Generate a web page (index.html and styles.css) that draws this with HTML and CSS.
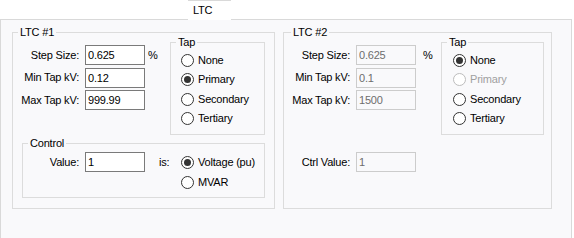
FILE: index.html
```html
<!DOCTYPE html>
<html>
<head>
<meta charset="utf-8">
<link rel="stylesheet" href="styles.css">
</head>
<body>
<div class="tabstrip"><div class="tab">LTC</div></div>
<div class="page">
  <div class="group ltc1">
    <span class="legend">LTC #1</span>
    <div class="top">
      <div class="fields">
        <span class="lbl">Step Size:</span><input class="tb" value="0.625"><span class="unit">%</span>
        <span class="lbl">Min Tap kV:</span><input class="tb" value="0.12"><span></span>
        <span class="lbl">Max Tap kV:</span><input class="tb" value="999.99"><span></span>
      </div>
      <div class="group tap">
        <span class="legend">Tap</span>
        <div class="opt"><span class="radio"></span>None</div>
        <div class="opt"><span class="radio on"></span>Primary</div>
        <div class="opt"><span class="radio"></span>Secondary</div>
        <div class="opt"><span class="radio"></span>Tertiary</div>
      </div>
    </div>
    <div class="group control">
      <span class="legend">Control</span>
      <div class="ctrl-row">
        <span class="lbl">Value:</span>
        <input class="tb" value="1">
        <span class="is">is:</span>
        <div class="ctrl-radios">
          <div class="opt"><span class="radio on"></span>Voltage (pu)</div>
          <div class="opt"><span class="radio"></span>MVAR</div>
        </div>
      </div>
    </div>
  </div>
  <div class="group ltc2">
    <span class="legend">LTC #2</span>
    <div class="top">
      <div class="fields">
        <span class="lbl">Step Size:</span><input class="tb" value="0.625" disabled><span class="unit">%</span>
        <span class="lbl">Min Tap kV:</span><input class="tb" value="0.1" disabled><span></span>
        <span class="lbl">Max Tap kV:</span><input class="tb" value="1500" disabled><span></span>
      </div>
      <div class="group tap">
        <span class="legend">Tap</span>
        <div class="opt"><span class="radio on"></span>None</div>
        <div class="opt off"><span class="radio"></span>Primary</div>
        <div class="opt"><span class="radio"></span>Secondary</div>
        <div class="opt"><span class="radio"></span>Tertiary</div>
      </div>
    </div>
    <div class="fields ctrl2">
      <span class="lbl">Ctrl Value:</span><input class="tb" value="1" disabled><span></span>
    </div>
  </div>
</div>
</body>
</html>
```
FILE: styles.css
```css
body {
  margin: 0;
  background: #ffffff;
  font-family: "Liberation Sans", Arial, sans-serif;
  font-size: 11px;
  line-height: 13px;
  letter-spacing: -0.2px;
  color: #000;
  width: 574px;
  height: 238px;
  overflow: hidden;
}

.tabstrip {
  height: 20px;
  display: flex;
}

.tab {
  margin-left: 188px;
  width: 43px;
  height: 20px;
  box-sizing: border-box;
  padding: 3px 0 0 5px;
  background: #ffffff;
  border-top: 1px solid #d9d9d9;
  position: relative;
  z-index: 1;
}

.page {
  margin-top: -1px;
  width: 572px;
  height: 230px;
  box-sizing: border-box;
  border: 1px solid #d9d9d9;
  border-bottom: none;
  background: #f9f9fb;
  display: flex;
  align-items: flex-start;
  gap: 8px;
  padding: 12px 0 0 11px;
}

.group {
  position: relative;
  border: 1px solid #dcdcdc;
  box-sizing: border-box;
}

.legend {
  position: absolute;
  top: -7px;
  left: 5px;
  padding: 0 2px;
  background: #f9f9fb;
  line-height: 13px;
  white-space: nowrap;
}

.ltc2 > .legend {
  left: 7px;
}

.ltc1 {
  width: 263px;
  height: 177px;
}

.ltc2 {
  width: 269px;
  height: 177px;
}

.top {
  display: flex;
  align-items: flex-start;
}

.fields {
  width: 157px;
  flex: none;
  margin-top: 12px;
  display: grid;
  grid-template-columns: 72px 60px auto;
  grid-auto-rows: 20px;
  row-gap: 2.5px;
  align-items: center;
}

.lbl {
  text-align: right;
  padding-right: 6px;
  white-space: nowrap;
}

.tb {
  box-sizing: border-box;
  width: 60px;
  height: 20px;
  border: 1px solid #7a7a7a;
  background: #ffffff;
  font: inherit;
  letter-spacing: inherit;
  padding: 0 2px;
  margin: 0;
  color: #000;
  outline: none;
}

.tb:disabled {
  border-color: #cccccc;
  background: #f9f9fb;
  color: #6d6d6d;
}

.unit {
  margin-left: 3px;
}

.ltc2 .unit {
  margin-left: 7px;
}

.tap {
  margin-top: 9px;
  width: 95px;
  height: 93px;
  padding: 8px 0 0 10px;
  flex: none;
}

.ltc2 .tap {
  width: 103px;
  padding-left: 11px;
}

.opt {
  display: flex;
  align-items: center;
  gap: 4px;
  height: 19.33px;
  white-space: nowrap;
}

.radio {
  width: 13px;
  height: 13px;
  box-sizing: border-box;
  border: 1px solid #333333;
  border-radius: 50%;
  background: #ffffff;
  display: flex;
  align-items: center;
  justify-content: center;
  flex: none;
}

.radio.on::after {
  content: "";
  width: 7px;
  height: 7px;
  border-radius: 50%;
  background: #333333;
}

.opt.off {
  color: #a0a0a0;
}

.opt.off .radio {
  border-color: #bcbcbc;
}

.control {
  width: 243px;
  height: 55px;
  margin: 8px 0 0 9px;
}

.ctrl-row {
  display: flex;
  align-items: flex-start;
  margin-top: 8px;
}

.ctrl-row .lbl {
  width: 62px;
  box-sizing: border-box;
  line-height: 20px;
}

.is {
  width: 36px;
  padding-left: 14px;
  box-sizing: border-box;
  line-height: 20px;
}

.ctrl-radios .opt {
  height: 20px;
}

.ctrl2 {
  margin-top: 17px;
}
```
